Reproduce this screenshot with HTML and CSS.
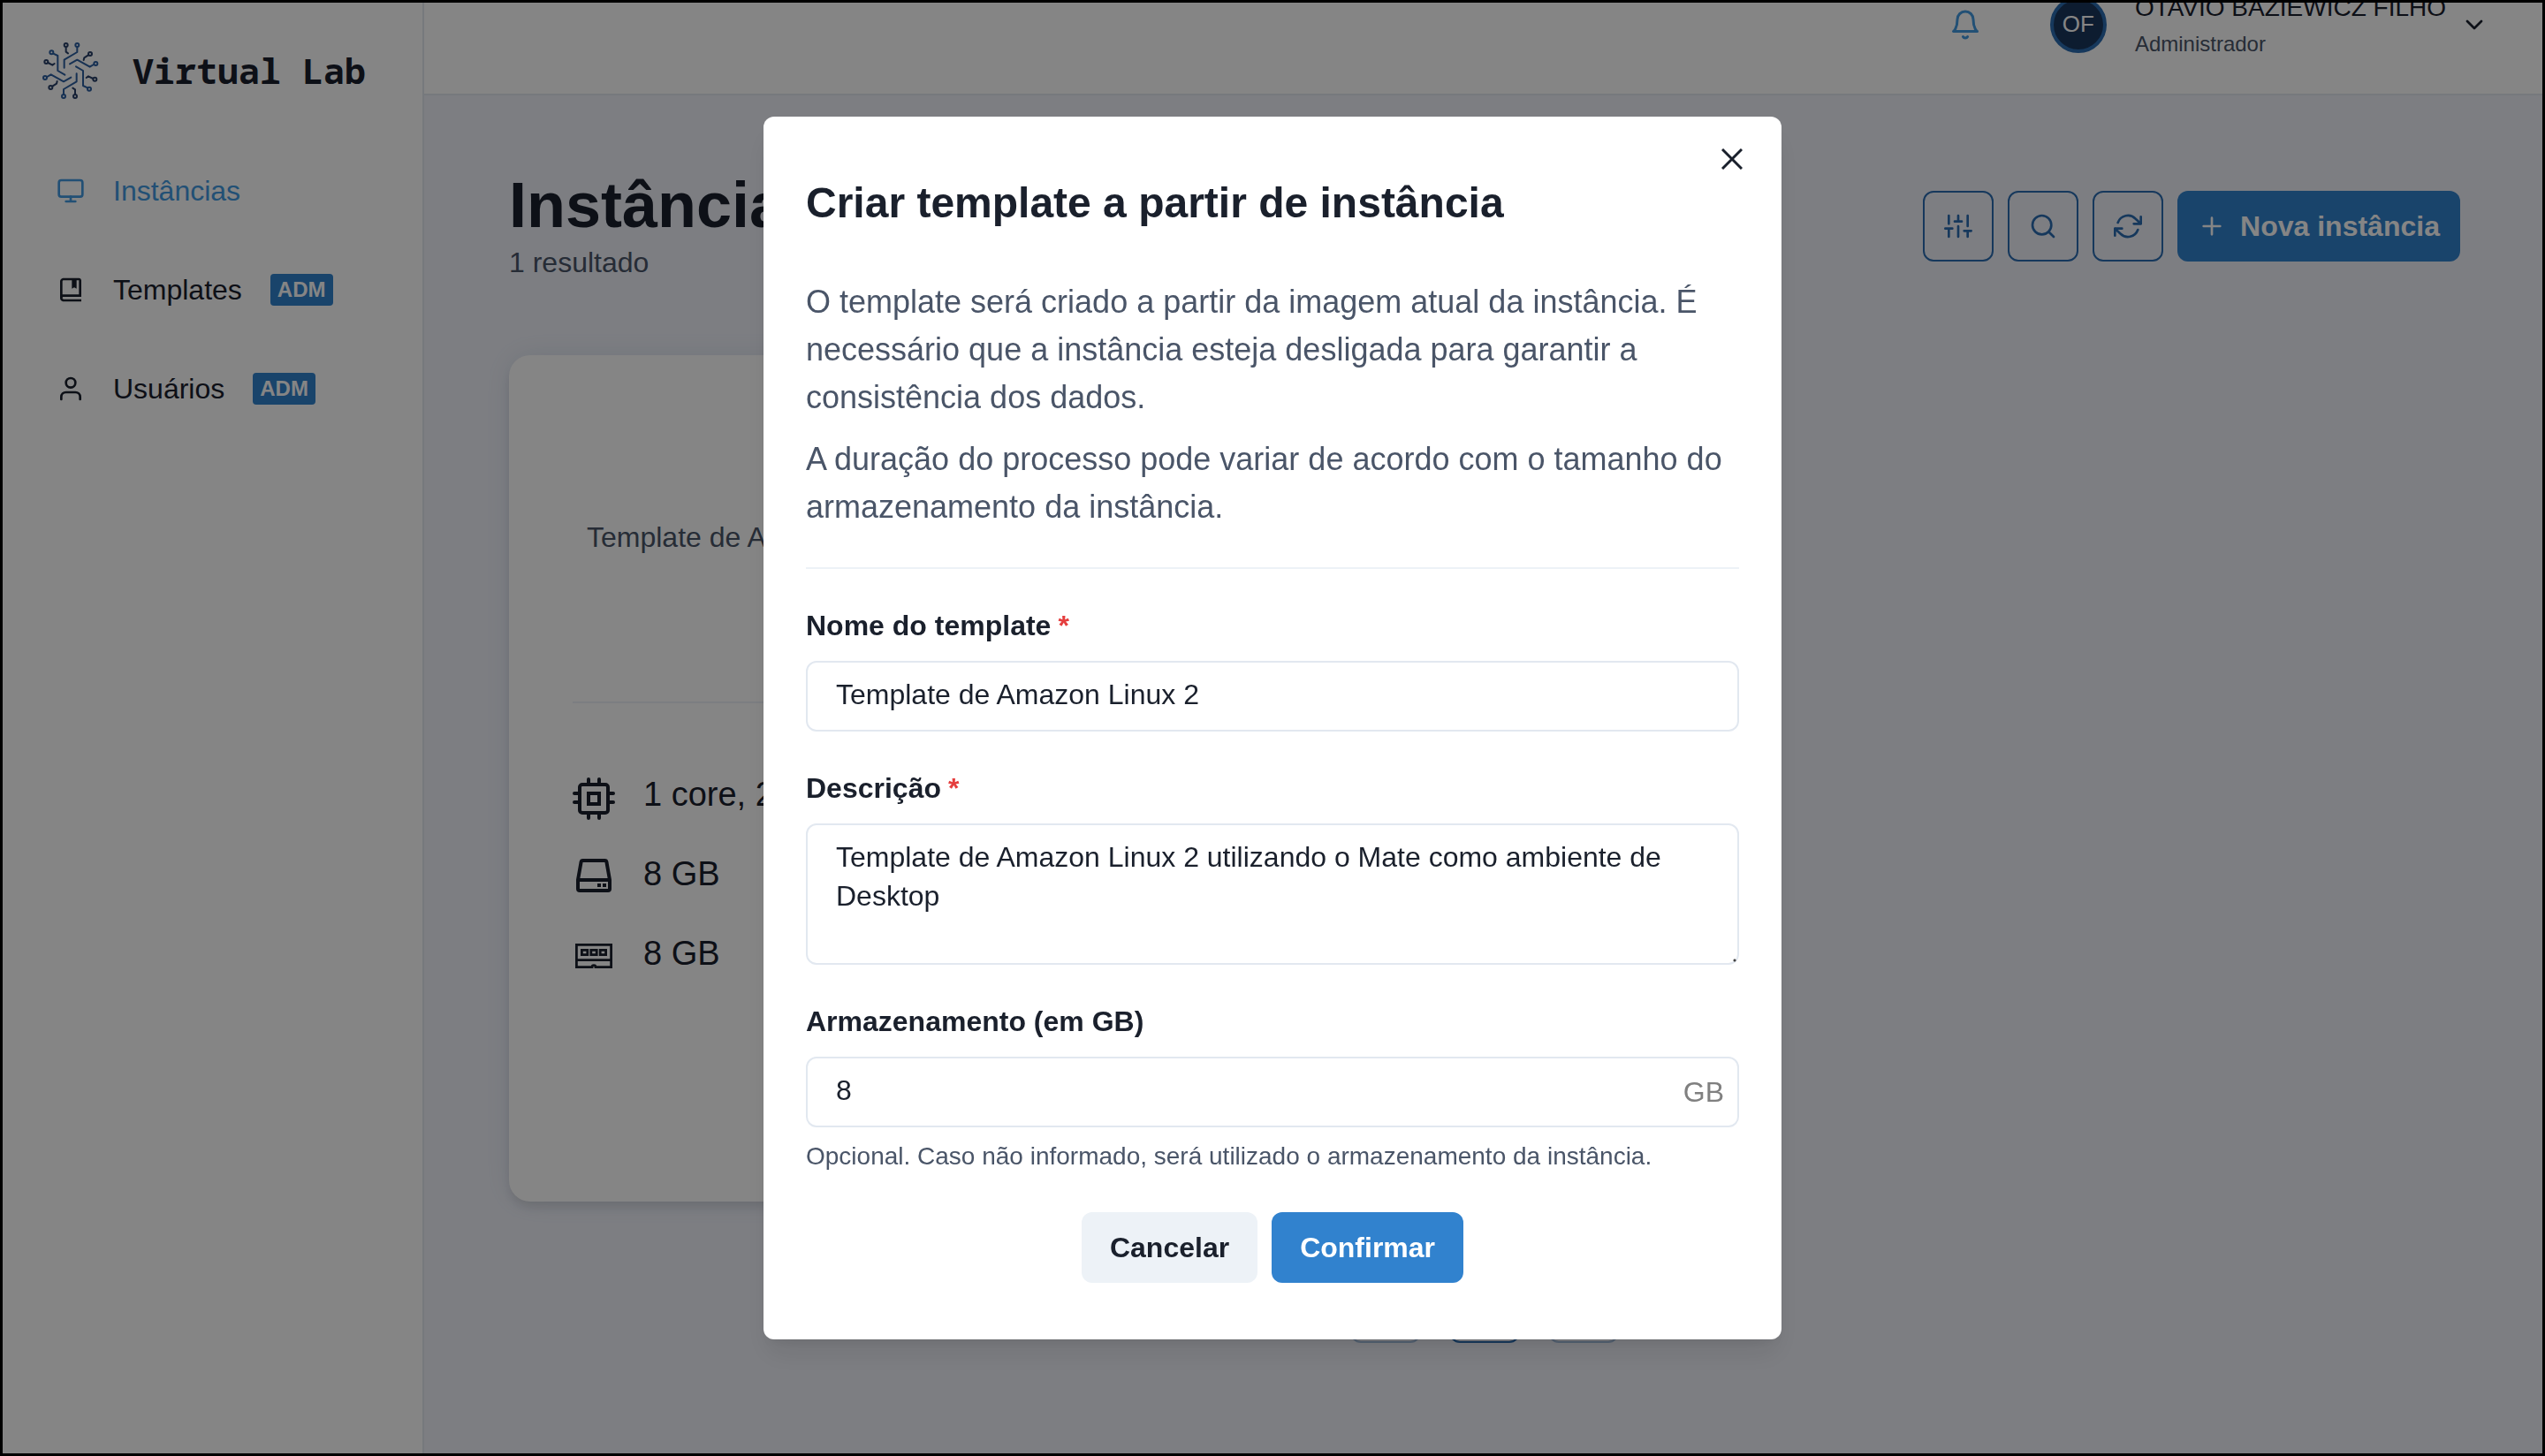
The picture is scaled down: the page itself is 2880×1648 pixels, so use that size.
FILE: index.html
```html
<!DOCTYPE html>
<html lang="pt-BR">
<head>
  <meta charset="utf-8">
  <title>Virtual Lab</title>
  <link rel="stylesheet" href="styles.css">
</head>
<body>
  <div class="app">
    <aside class="sidebar">
      <div class="brand">
        <svg class="brand-logo" viewBox="54 54 192 192" fill="none" stroke-width="6" stroke-linejoin="round" stroke-linecap="round" aria-hidden="true">
          <g stroke="#2c5fa0">
            <circle cx="85" cy="88" r="6"/><path d="M91 92L106 99V150L130 164"/>
            <circle cx="172" cy="63" r="6"/><path d="M172 70V87L128 113V140"/>
            <circle cx="235" cy="126" r="6"/><path d="M228 129L215 137L172 113L147 127"/>
            <circle cx="213" cy="212" r="6"/><path d="M207 208L192 201V150L168 136"/>
            <circle cx="126" cy="237" r="6"/><path d="M126 230V213L170 187V160"/>
            <circle cx="63" cy="174" r="6"/><path d="M70 171L83 163L126 187L151 173"/>
          </g>
          <g stroke="#2a4068">
            <circle cx="134" cy="63" r="6"/><path d="M134 70V86L141 91"/>
            <circle cx="216" cy="93" r="6"/><path d="M210 97L196 106L194 114"/>
            <circle cx="67" cy="120" r="6"/><path d="M73 123L88 131L95 126"/>
            <circle cx="165" cy="237" r="6"/><path d="M165 230V214L157 209"/>
            <circle cx="82" cy="207" r="6"/><path d="M88 203L102 194L104 186"/>
            <circle cx="232" cy="179" r="6"/><path d="M226 177L210 169L203 174"/>
          </g>
        </svg>
        <span class="brand-name">Virtual Lab</span>
      </div>
      <nav class="nav">
        <a class="nav-link nav-link-active" href="#instancias">
          <svg class="icon" viewBox="0 0 24 24" aria-hidden="true"><rect x="2" y="3" width="20" height="14" rx="2"/><path d="M8 21h8M12 17v4"/></svg>
          Instâncias
        </a>
        <a class="nav-link" href="#templates">
          <svg class="icon-solid" viewBox="0 0 24 24" aria-hidden="true"><path d="M19 2H6C4.794 2 3 2.799 3 5v14c0 2.201 1.794 3 3 3h15v-2H6.012C5.55 19.988 5 19.805 5 19s.55-.988 1.012-1H21V4c0-1.103-.897-2-2-2zm0 14H5V5c0-.806.55-.988 1-1h7v7l2-1 2 1V4h2v12z"/></svg>
          Templates <span class="badge">ADM</span>
        </a>
        <a class="nav-link" href="#usuarios">
          <svg class="icon" viewBox="0 0 24 24" aria-hidden="true"><path d="M20 21v-2a4 4 0 0 0-4-4H8a4 4 0 0 0-4 4v2"/><circle cx="12" cy="7" r="4"/></svg>
          Usuários <span class="badge">ADM</span>
        </a>
      </nav>
    </aside>

    <div class="page">
      <header class="topbar">
        <button class="bell" type="button" aria-label="Notificações">
          <svg class="icon icon-bell" viewBox="0 0 24 24" aria-hidden="true"><path d="M18 8A6 6 0 0 0 6 8c0 7-3 9-3 9h18s-3-2-3-9M13.73 21a2 2 0 0 1-3.46 0"/></svg>
        </button>
        <button class="account" type="button">
          <span class="avatar">OF</span>
          <span class="account-text">
            <span class="account-name">OTAVIO BAZIEWICZ FILHO</span>
            <span class="account-role">Administrador</span>
          </span>
          <svg class="icon" viewBox="0 0 24 24" aria-hidden="true"><path d="M6 9l6 6 6-6"/></svg>
        </button>
      </header>

      <main class="main">
        <div class="heading-row">
          <div>
            <h1 class="title">Instâncias</h1>
            <p class="subtitle">1 resultado</p>
          </div>
          <div class="toolbar">
            <button class="btn-outline" type="button" aria-label="Filtros">
              <svg class="icon" viewBox="0 0 24 24" aria-hidden="true"><path d="M4 21v-7M4 10V3M12 21v-9M12 8V3M20 21v-5M20 12V3M1 14h6M9 8h6M17 16h6"/></svg>
            </button>
            <button class="btn-outline" type="button" aria-label="Buscar">
              <svg class="icon" viewBox="0 0 24 24" aria-hidden="true"><circle cx="11" cy="11" r="8"/><path d="M21 21l-4.350-4.350"/></svg>
            </button>
            <button class="btn-outline" type="button" aria-label="Atualizar">
              <svg class="icon" viewBox="0 0 24 24" aria-hidden="true"><path d="M23 4v6h-6M1 20v-6h6M3.510 9a9 9 0 0 1 14.850-3.360L23 10M1 14l4.640 4.360A9 9 0 0 0 20.490 15"/></svg>
            </button>
            <button class="btn btn-primary btn-new" type="button">
              <svg class="icon" viewBox="0 0 24 24" aria-hidden="true"><path d="M12 5v14M5 12h14"/></svg>
              Nova instância
            </button>
          </div>
        </div>

        <article class="card">
          <p class="card-text">Template de Amazon Linux 2 utilizando o Mate como ambiente de Desktop</p>
          <ul class="specs">
            <li class="spec">
              <svg class="spec-icon" viewBox="0 0 24 24" aria-hidden="true"><rect x="4" y="4" width="16" height="16" rx="1.500"/><rect x="9" y="9" width="6" height="6"/><path stroke-linecap="round" d="M9 4V1M15 4V1M9 20v3M15 20v3M4 9H1M4 14H1M20 9h3M20 14h3"/></svg>
              1 core, 2 GB
            </li>
            <li class="spec">
              <svg class="spec-icon" viewBox="0 0 24 24" aria-hidden="true"><path d="M5.800 2h12.400a1 1 0 0 1 1 .850L21 13v5a1 1 0 0 1-1 1H4a1 1 0 0 1-1-1v-5L4.800 2.850a1 1 0 0 1 1-.850zM3 13h18M14 16h2M17 16h2"/></svg>
              8 GB
            </li>
            <li class="spec">
              <svg class="spec-icon spec-icon-thin" viewBox="0 0 24 24" aria-hidden="true"><path d="M11 17.300H2.200V4.700h19.600v12.600H13a1 1 0 0 0-2 0zM2 13.300h20M5.200 7.700h3.200v2.600H5.200zM10.400 7.700h3.200v2.600h-3.200zM15.600 7.700h3.200v2.600h-3.200z"/></svg>
              8 GB
            </li>
          </ul>
        </article>

        <nav class="pager" aria-label="Paginação">
          <button class="pager-btn" type="button" disabled aria-label="Página anterior"></button>
          <button class="pager-btn" type="button" aria-label="Página atual"></button>
          <button class="pager-btn" type="button" disabled aria-label="Próxima página"></button>
        </nav>
      </main>
    </div>
  </div>

  <div class="overlay">
    <section class="modal" role="dialog" aria-modal="true" aria-labelledby="modal-title">
      <button class="modal-close" type="button" aria-label="Fechar">
        <svg viewBox="0 0 24 24" aria-hidden="true"><path d="M1 1l22 22M23 1L1 23"/></svg>
      </button>
      <h2 class="modal-title" id="modal-title">Criar template a partir de instância</h2>
      <div class="modal-intro">
        <p>O template será criado a partir da imagem atual da instância. É necessário que a instância esteja desligada para garantir a consistência dos dados.</p>
        <p>A duração do processo pode variar de acordo com o tamanho do armazenamento da instância.</p>
      </div>
      <form class="form">
        <div class="field">
          <label class="label" for="nome">Nome do template<span class="required">*</span></label>
          <input class="control" id="nome" type="text" value="Template de Amazon Linux 2">
        </div>
        <div class="field">
          <label class="label" for="descricao">Descrição<span class="required">*</span></label>
          <textarea class="control control-area" id="descricao">Template de Amazon Linux 2 utilizando o Mate como ambiente de Desktop</textarea>
        </div>
        <div class="field">
          <label class="label" for="armazenamento">Armazenamento (em GB)</label>
          <div class="control-group">
            <input class="control" id="armazenamento" type="text" inputmode="numeric" value="8" aria-describedby="ajuda">
            <span class="unit">GB</span>
          </div>
          <p class="help" id="ajuda">Opcional. Caso não informado, será utilizado o armazenamento da instância.</p>
        </div>
        <div class="actions">
          <button class="btn btn-muted" type="button">Cancelar</button>
          <button class="btn btn-primary" type="submit">Confirmar</button>
        </div>
      </form>
    </section>
  </div>
  <div class="window-frame"></div>
</body>
</html>
```
FILE: styles.css
```css
* {
  box-sizing: border-box;
  margin: 0;
  padding: 0;
}

body {
  font-family: "Liberation Sans", Arial, sans-serif;
  font-size: 32px;
  line-height: 48px;
  color: #1a202c;
  background: #f0f2fa;
  height: 100vh;
  overflow: hidden;
}

button,
input,
textarea {
  font: inherit;
  color: inherit;
}

button {
  border: 0;
  background: none;
}

a {
  color: inherit;
  text-decoration: none;
}

ul {
  list-style: none;
}

.icon,
.icon-solid {
  width: 32px;
  height: 32px;
  flex: none;
}

.icon {
  fill: none;
  stroke: currentColor;
  stroke-width: 2;
  stroke-linecap: round;
  stroke-linejoin: round;
}

.icon-solid {
  fill: currentColor;
}

.icon-bell {
  width: 36px;
  height: 36px;
}

.app {
  display: flex;
  min-height: 100vh;
}

/* Sidebar */
.sidebar {
  width: 480px;
  flex: none;
  background: #fff;
  border-right: 2px solid #e2e8f0;
}

.brand {
  display: flex;
  align-items: center;
  gap: 38px;
  height: 160px;
  padding: 0 48px;
}

.brand-logo {
  width: 64px;
  height: 64px;
}

.brand-name {
  font-family: "Noto Sans Mono", "DejaVu Sans Mono", monospace;
  font-size: 40px;
  font-weight: 700;
}

.nav-link {
  display: flex;
  align-items: center;
  gap: 32px;
  height: 112px;
  padding: 0 64px;
}

.nav-link-active {
  color: #4299e1;
}

.badge {
  padding: 0 8px;
  border-radius: 4px;
  background: #3182ce;
  color: #fff;
  font-size: 24px;
  font-weight: 700;
  line-height: 36px;
}

/* Page: the scrolled position leaves the top of the bar out of view */
.page {
  flex: 1;
  min-width: 0;
  margin-top: -52px;
}

.topbar {
  display: flex;
  align-items: center;
  justify-content: flex-end;
  gap: 78px;
  height: 160px;
  padding: 0 64px;
  background: #fff;
  box-shadow: inset 0 -2px #e2e8f0;
}

.bell {
  display: flex;
  color: #4299e1;
}

.account {
  display: flex;
  align-items: center;
  text-align: left;
}

.avatar {
  width: 64px;
  height: 64px;
  margin-right: 32px;
  border: 4px solid #2b6cb0;
  border-radius: 50%;
  background: #1a365d;
  color: #fff;
  font-size: 26px;
  line-height: 54px;
  text-align: center;
}

.account-text {
  display: flex;
  flex-direction: column;
  gap: 2px;
  margin-right: 16px;
}

.account-name {
  font-size: 28px;
  line-height: 42px;
}

.account-role {
  color: #4a5568;
  font-size: 24px;
  line-height: 36px;
}

.main {
  padding: 83px 96px;
}

.heading-row {
  display: flex;
  align-items: center;
  justify-content: space-between;
}

.title {
  font-size: 72px;
  line-height: 82px;
}

.subtitle {
  color: #4a5568;
}

.toolbar {
  display: flex;
  gap: 16px;
}

.btn,
.btn-outline {
  display: flex;
  align-items: center;
  justify-content: center;
  height: 80px;
  border-radius: 12px;
}

.btn {
  padding: 0 32px;
  font-weight: 700;
}

.btn-primary {
  background: #3182ce;
  color: #fff;
}

.btn-muted {
  background: #edf2f7;
}

.btn-new {
  gap: 16px;
  width: 320px;
  padding: 0;
}

.btn-outline {
  width: 80px;
  border: 2px solid #2b6cb0;
  color: #2b6cb0;
}

.card {
  width: 720px;
  min-height: 958px;
  margin-top: 81px;
  padding: 182px 72px 72px;
  border-radius: 24px;
  background: #fff;
  box-shadow: 0 8px 12px -2px rgba(0, 0, 0, 0.1), 0 0 32px rgba(74, 104, 136, 0.12);
}

.card-text {
  padding: 0 16px;
  overflow: hidden;
  color: #4a5568;
  white-space: nowrap;
  text-overflow: ellipsis;
}

.specs {
  display: flex;
  flex-direction: column;
  gap: 28px;
  margin-top: 162px;
  padding-top: 72px;
  border-top: 2px solid #edf2f7;
}

.spec {
  display: flex;
  align-items: flex-start;
  gap: 32px;
  font-size: 38px;
  line-height: 62px;
}

.spec-icon {
  width: 48px;
  height: 48px;
  margin-top: 12px;
  fill: none;
  stroke: currentColor;
  stroke-width: 2;
}

.spec-icon-thin {
  stroke-width: 1.4;
}

.pager {
  display: flex;
  justify-content: center;
  gap: 32px;
  margin-top: 80px;
}

.pager-btn {
  width: 80px;
  height: 80px;
  border: 2px solid #2b6cb0;
  border-radius: 12px;
}

.pager-btn:disabled {
  opacity: 0.4;
}

/* Modal */
.overlay {
  position: fixed;
  inset: 0;
  display: flex;
  align-items: center;
  justify-content: center;
  background: rgba(0, 0, 0, 0.48);
}

.modal {
  position: relative;
  width: 40%;
  min-width: 1000px;
  padding: 64px 48px;
  border-radius: 12px;
  background: #fff;
  box-shadow: 0 20px 30px -6px rgba(0, 0, 0, 0.1), 0 8px 12px -4px rgba(0, 0, 0, 0.05);
}

.modal-close {
  position: absolute;
  top: 16px;
  right: 24px;
  display: flex;
  align-items: center;
  justify-content: center;
  width: 64px;
  height: 64px;
}

.modal-close svg {
  width: 24px;
  height: 24px;
  fill: none;
  stroke: currentColor;
  stroke-width: 3;
}

.modal-title {
  font-size: 48px;
  line-height: 68px;
}

.modal-intro {
  display: flex;
  flex-direction: column;
  gap: 16px;
  margin-top: 51px;
  padding-bottom: 41px;
  border-bottom: 2px solid #edf2f7;
  color: #4a5568;
  font-size: 36px;
  line-height: 54px;
}

.form {
  display: flex;
  flex-direction: column;
  gap: 40px;
  padding-top: 40px;
}

.label {
  display: block;
  margin-bottom: 16px;
  font-weight: 700;
}

.required {
  margin-left: 8px;
  color: #e53e3e;
}

.control {
  display: block;
  width: 100%;
  height: 80px;
  padding: 0 32px 4px;
  border: 2px solid #e2e8f0;
  border-radius: 12px;
  background: #fff;
  outline: 0;
}

.control-area {
  height: 160px;
  padding: 14px 32px;
  line-height: 44px;
  resize: vertical;
}

.control-area::-webkit-resizer {
  background: radial-gradient(circle at 12px 12px, #444 1px, transparent 2px);
}

.control-group {
  position: relative;
}

.unit {
  position: absolute;
  top: 16px;
  right: 17px;
  color: #808080;
}

.help {
  margin-top: 16px;
  color: #4a5568;
  font-size: 28px;
  line-height: 34px;
}

.actions {
  display: flex;
  justify-content: center;
  gap: 16px;
  padding-top: 6px;
}

.window-frame {
  position: fixed;
  inset: 0;
  border: 3px solid #000;
  pointer-events: none;
}
```
